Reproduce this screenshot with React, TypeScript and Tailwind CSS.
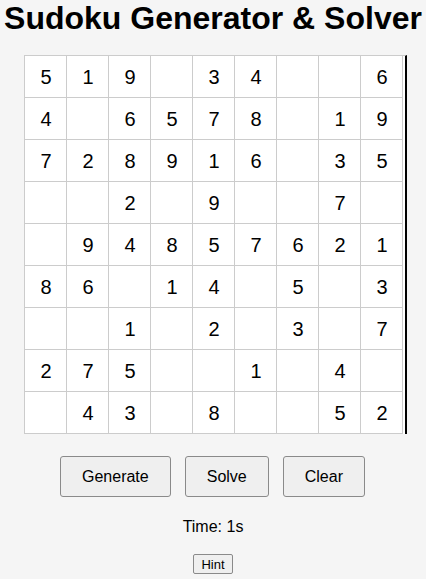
import React from "react";

const board: (number | null)[][] = [
    [5, 1, 9, null, 3, 4, null, null, 6],
    [4, null, 6, 5, 7, 8, null, 1, 9],
    [7, 2, 8, 9, 1, 6, null, 3, 5],
    [null, null, 2, null, 9, null, null, 7, null],
    [null, 9, 4, 8, 5, 7, 6, 2, 1],
    [8, 6, null, 1, 4, null, 5, null, 3],
    [null, null, 1, null, 2, null, 3, null, 7],
    [2, 7, 5, null, null, 1, null, 4, null],
    [null, 4, 3, null, 8, null, null, 5, 2],
];

export default function App() {
    return (
        <main className="min-h-[579px] bg-[#f5f5f5] text-black font-['Liberation_Sans',Arial,sans-serif]">
            <h1 className="text-center text-[32px] font-bold leading-[37px] mb-[18px]">Sudoku Generator &amp; Solver</h1>
            <div className="pl-[24px]">
                <div className="inline-grid grid-cols-9 border-l border-t border-[#cccccc] border-r-2 border-r-black bg-white pr-[2px]">
                    {board.flat().map((v, i) => (
                        <div key={i} className="w-[42px] h-[42px] pl-px border-r border-b border-[#cccccc] flex items-center justify-center text-[20px]">
                            {v ?? ""}
                        </div>
                    ))}
                </div>
            </div>
            <div className="flex justify-center gap-[14px] mt-[22px] pr-[1px]">
                <button className="h-[41px] px-[21px] text-[16px] bg-[#efefef] border border-[#8a8a8a] rounded-[3px]">Generate</button>
                <button className="h-[41px] px-[21px] text-[16px] bg-[#efefef] border border-[#8a8a8a] rounded-[3px]">Solve</button>
                <button className="h-[41px] px-[21px] text-[16px] bg-[#efefef] border border-[#8a8a8a] rounded-[3px]">Clear</button>
            </div>
            <p className="text-center text-[16px] mt-[20px] leading-[20px]">Time: 1s</p>
            <div className="flex justify-center mt-[17px]">
                <button className="h-[20px] px-[7px] text-[13px] leading-[15px] bg-[#efefef] border border-[#8a8a8a] rounded-[2px]">Hint</button>
            </div>
        </main>
    );
}
